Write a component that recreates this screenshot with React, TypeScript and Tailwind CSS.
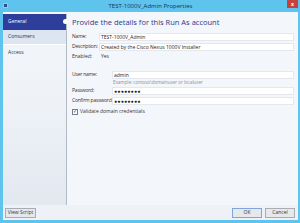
import React from 'react';

const font = { fontFamily: '"Open Sans", "Noto Sans", sans-serif' };

function Field({ label, value, labelW, dots }: { label: string; value: string; labelW: string; dots?: boolean }) {
  return (
    <div className="flex items-center h-[8px]">
      <div className={`${labelW} shrink-0 text-[5px] tracking-[-0.2px] whitespace-nowrap text-[#333]`}>{label}</div>
      <div className="flex-1 h-[8px] bg-white border border-[#e4e8ee] flex items-center pl-[1px] text-[5px] text-[#222] leading-none whitespace-nowrap">
        {dots ? <span className="tracking-[0.3px] text-[5px]">●●●●●●●●</span> : value}
      </div>
    </div>
  );
}

export default function App() {
  return (
    <div style={font} className="w-[300px] h-[223px] bg-[#5ec4ee] flex flex-col pl-[3px] pr-[2px] pb-[3px] overflow-hidden">
      {/* title bar */}
      <div className="relative h-[12px] shrink-0 flex items-center justify-center">
        <div className="absolute left-[0px] top-[3px] w-[5px] h-[5px] bg-[#2c4f8a] border border-[#9fc3e6]" />
        <span className="text-[6px] text-[#1d2f4a] leading-none">TEST-1000V_Admin Properties</span>
        <div className="absolute right-[0px] top-0 w-[11px] h-[8px] bg-[#c8403a] flex items-center justify-center text-white text-[5px] font-bold leading-none">x</div>
      </div>

      <div className="flex-1 flex flex-col bg-[#eef1f5]">
        <div className="flex-1 flex">
          {/* nav */}
          <div className="w-[63px] shrink-0 flex flex-col pt-[2px] bg-gradient-to-b from-[#f3f6fa] via-[#eef2f7] to-[#e2e8f0]">
            <div className="relative h-[16px] bg-[#2d3e9c] flex items-center pl-[5px] text-[5px] text-white">
              General
              <div className="absolute right-[-2px] top-[5px] w-[5px] h-[5px] rounded-full bg-white" />
            </div>
            <div className="h-[15px] bg-[#dde5f2] border-b border-white flex items-center pl-[5px] text-[5px] text-[#333]">Consumers</div>
            <div className="h-[15px] flex items-center pl-[5px] text-[5px] text-[#333]">Access</div>
          </div>
          <div className="w-[1px] bg-[#b4bac3] mt-[2px]" />

          {/* content */}
          <div className="flex-1 bg-[#f3f6fa] flex flex-col pl-[5px] pr-[4px]">
            <div className="h-[20px] flex items-center pt-[1px] text-[7.5px] text-[#2a3a8a] whitespace-nowrap">Provide the details for this Run As account</div>
            <div className="flex flex-col gap-[2px] mt-[1px]">
              <Field label="Name:" value="TEST-1000V_Admin" labelW="w-[27px]" />
              <Field label="Description:" value="Created by the Cisco Nexus 1000V Installer" labelW="w-[27px]" />
              <div className="flex items-center h-[8px] text-[5px] text-[#333]">
                <div className="w-[29px]">Enabled:</div>
                <div>Yes</div>
              </div>
            </div>
            <div className="flex flex-col mt-[10px]">
              <Field label="User name:" value="admin" labelW="w-[40px]" />
              <div className="pl-[41px] h-[7px] flex items-center text-[4.5px] text-[#8a8f96] whitespace-nowrap">Example: contoso\domainuser or localuser</div>
              <div className="flex flex-col gap-[2px] mt-[1px]">
                <Field label="Password:" value="" labelW="w-[40px]" dots />
                <Field label="Confirm password:" value="" labelW="w-[40px]" dots />
              </div>
              <div className="flex items-center gap-[2px] mt-[3px] text-[5px] text-[#333]">
                <div className="w-[6px] h-[6px] bg-white border border-[#7a8090] flex items-center justify-center text-[5px] leading-none text-[#333]">✓</div>
                Validate domain credentials
              </div>
            </div>
          </div>
        </div>

        {/* bottom bar */}
        <div className="h-[15px] shrink-0 flex items-center justify-between pl-[2px] pr-[3px]">
          <div className="w-[31px] h-[10px] bg-[#e6e8ec] border border-[#a9adb3] flex items-center justify-center text-[5px] text-[#333]">View Script</div>
          <div className="flex gap-[3px]">
            <div className="w-[30px] h-[10px] bg-[#e6e8ec] border border-[#7fa6d6] flex items-center justify-center text-[5px] text-[#333]">OK</div>
            <div className="w-[30px] h-[10px] bg-[#e6e8ec] border border-[#a9adb3] flex items-center justify-center text-[5px] text-[#333]">Cancel</div>
          </div>
        </div>
      </div>
    </div>
  );
}
